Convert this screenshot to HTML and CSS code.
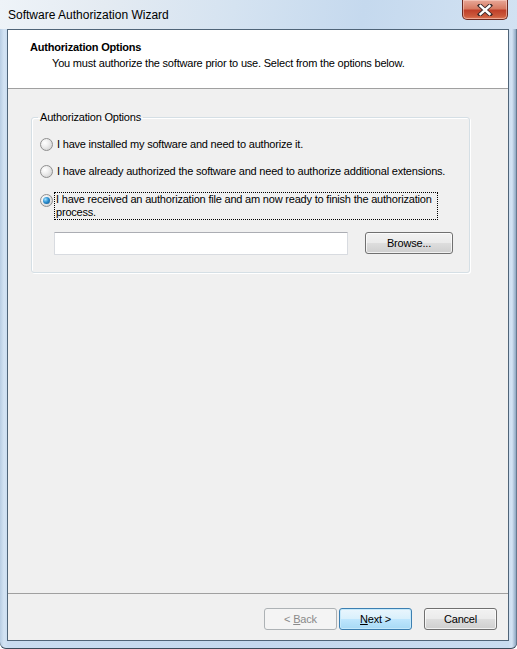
FILE: index.html
```html
<!DOCTYPE html>
<html>
<head>
<meta charset="utf-8">
<link rel="stylesheet" href="styles.css">
</head>
<body>
<div class="window">
  <div class="titlebar">
    <span class="title">Software Authorization Wizard</span>
    <div class="close">
      <svg width="16" height="12" viewBox="0 0 16 12">
        <path d="M3 1.5 L13 10.5 M13 1.5 L3 10.5" stroke="#3a2a2a" stroke-width="4.2" stroke-linecap="square" fill="none"/>
        <path d="M3.5 2 L12.5 10 M12.5 2 L3.5 10" stroke="#ffffff" stroke-width="2.4" stroke-linecap="square" fill="none"/>
      </svg>
    </div>
  </div>
  <div class="client">
    <div class="header">
      <div class="h-title">Authorization Options</div>
      <div class="h-sub">You must authorize the software prior to use. Select from the options below.</div>
    </div>
    <div class="body">
      <fieldset class="group">
        <legend class="legend">Authorization Options</legend>
        <div class="opt opt1"><span class="radio"></span><span class="lbl">I have installed my software and need to authorize it.</span></div>
        <div class="opt opt2"><span class="radio"></span><span class="lbl">I have already authorized the software and need to authorize additional extensions.</span></div>
        <div class="opt opt3"><span class="radio checked"></span><span class="lbl focus">I have received an authorization file and am now ready to finish the authorization process.</span></div>
        <div class="file-row">
          <div class="input"></div>
          <div class="btn browse"><span>Browse...</span></div>
        </div>
      </fieldset>
    </div>
    <div class="footer">
      <div class="btn disabled"><span>&lt; <u>B</u>ack</span></div>
      <div class="btn default"><span><u>N</u>ext &gt;</span></div>
      <div class="btn cancel"><span>Cancel</span></div>
    </div>
  </div>
</div>
</body>
</html>
```

FILE: styles.css
```css
* { box-sizing: border-box; }
html, body { margin: 0; padding: 0; }
body {
  width: 517px;
  height: 649px;
  overflow: hidden;
  font-family: "Liberation Sans", Arial, sans-serif;
  font-size: 11px;
  letter-spacing: -0.2px;
  color: #000;
  background: #ffffff;
}
.window {
  width: 517px;
  height: 649px;
  display: flex;
  flex-direction: column;
  background: linear-gradient(90deg, #b8cde3 0px, #d3e3f3 4px, #c9dcf0 8px, #c4d8ee 50%, #c9dcf0 508px, #d3e3f3 512px, #8ea7c2 516px, #3c4a5a 517px);
  box-shadow: inset 0 -1px 0 #3c4a5a;
  border-radius: 0 0 6px 6px;
}
.titlebar {
  position: relative;
  height: 29px;
  flex: none;
  display: flex;
  align-items: center;
  padding-left: 8px;
  background: linear-gradient(100deg, #eef3f8 0%, #e4ebf2 20%, #d5e3f1 45%, #c5d9ee 70%, #d2e2f2 100%);
}
.title {
  font-size: 12px;
  letter-spacing: 0;
  color: #000;
  margin-top: 1px;
}
.close {
  position: absolute;
  top: 0;
  right: 9px;
  width: 46px;
  height: 20px;
  border: 1px solid #6b2a22;
  border-top: none;
  border-radius: 0 0 5px 5px;
  background: linear-gradient(180deg, #e8a898 0%, #d77b63 45%, #c0402a 55%, #cc5a3c 85%, #e07a5a 100%);
  box-shadow: inset 0 0 0 1px rgba(255,220,210,0.5);
  display: flex;
  align-items: center;
  justify-content: center;
}
.client {
  flex: 1;
  margin: 0 8px 8px 7px;
  border: 1px solid #4f6478;
  background: #f0f0f0;
  display: flex;
  flex-direction: column;
}
.header {
  height: 59px;
  flex: none;
  background: #ffffff;
  border-bottom: 1px solid #a0a0a0;
  padding: 10px 0 0 22px;
}
.h-title {
  font-weight: bold;
  line-height: 14px;
}
.h-sub {
  padding-left: 22px;
  line-height: 14px;
  margin-top: 2px;
}
.body {
  flex: 1;
  padding: 21px 38px 0 23px;
}
.group {
  margin: 0;
  height: 163px;
  border: 1px solid #d5dfe5;
  border-radius: 3px;
  padding: 0 0 0 6px;
  box-shadow: inset 1px 1px 0 #fff, 1px 1px 0 #fff;
}
.legend {
  padding: 0 2px;
  line-height: 14px;
}
.opt {
  display: flex;
  align-items: flex-start;
  padding-left: 2px;
}
.opt1 { margin-top: 13px; }
.opt2 { margin-top: 13px; }
.opt3 { margin-top: 15px; }
.radio {
  flex: none;
  width: 13px;
  height: 13px;
  border-radius: 50%;
  border: 1px solid #8f8f8f;
  background: radial-gradient(circle at 35% 35%, #ffffff 0%, #f0f0f0 35%, #c9c9c9 100%);
  position: relative;
  margin-right: 4px;
  margin-top: 1px;
}
.radio.checked::after {
  content: "";
  position: absolute;
  left: 2px;
  top: 2px;
  width: 7px;
  height: 7px;
  border-radius: 50%;
  background: radial-gradient(circle at 35% 35%, #9fe0ff 0%, #2b8fd0 45%, #0c4a80 100%);
}
.lbl {
  line-height: 14px;
}
.lbl.focus {
  outline: 1px dotted #000;
  outline-offset: 0;
  width: 382px;
  line-height: 13px;
  padding: 0 0 0 1px;
  margin-left: -2px;
}
.file-row {
  display: flex;
  margin-top: 13px;
  padding-left: 16px;
  align-items: flex-start;
}
.input {
  width: 294px;
  height: 23px;
  background: #fff;
  border: 1px solid #d8dbe0;
  border-top-color: #abadb3;
  border-radius: 1px;
}
.btn {
  height: 22px;
  border: 1px solid #707070;
  border-radius: 3px;
  background: linear-gradient(180deg, #f2f2f2 0%, #ebebeb 48%, #dddddd 52%, #cfcfcf 100%);
  box-shadow: inset 0 0 0 1px rgba(255,255,255,0.7);
  display: flex;
  align-items: center;
  justify-content: center;
  line-height: 14px;
}
.browse {
  width: 88px;
  margin-left: 17px;
}
.footer {
  height: 47px;
  flex: none;
  border-top: 1px solid #a0a0a0;
  display: flex;
  justify-content: flex-end;
  padding: 14px 11px 0 0;
}
.footer .btn {
  width: 73px;
  height: 22px;
}
.disabled {
  color: #8a8a8a;
  border-color: #adb2b5;
  background: #f4f4f4;
  box-shadow: none;
}
.default {
  margin-left: 2px;
  border-color: #3c7fb1;
  background: linear-gradient(180deg, #eaf6fd 0%, #d9f0fc 48%, #bee6fd 52%, #a7d9f5 100%);
  box-shadow: inset 0 0 0 1px #c5e9fb;
}
.cancel {
  margin-left: 12px;
}
u { text-decoration: underline; text-underline-offset: 1px; }
```
